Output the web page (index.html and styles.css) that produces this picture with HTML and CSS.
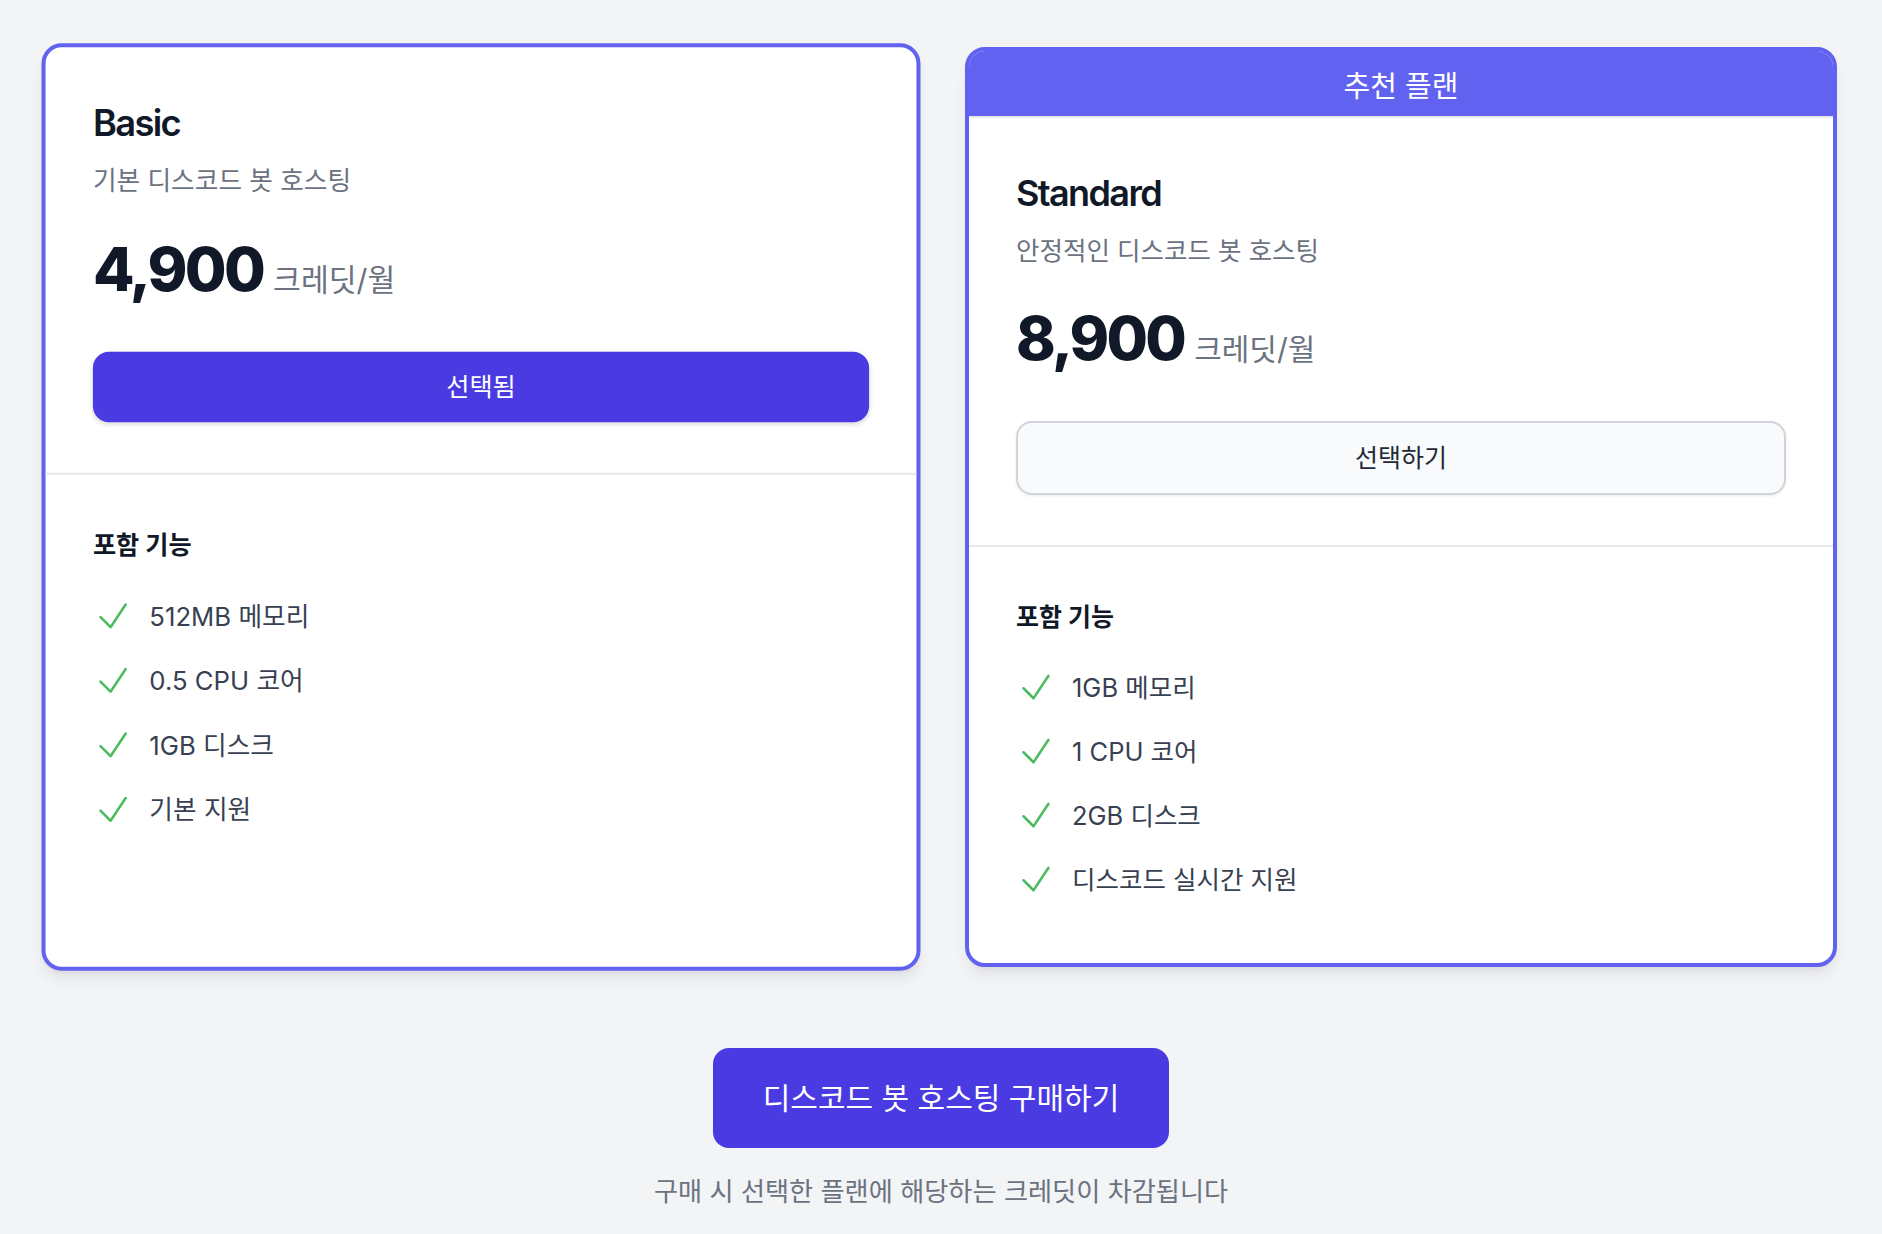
FILE: index.html
```html
<!DOCTYPE html>
<html lang="ko">
  <head>
    <meta charset="UTF-8" />
    <title>디스코드 봇 호스팅 플랜</title>
    <link rel="stylesheet" href="styles.css">
  </head>
  <body>
    <main class="page">
      <div class="plans">
        <!-- Basic (selected) -->
        <div class="plan plan-selected">
          <div class="plan-top">
            <h3 class="plan-name">Basic</h3>
            <p class="plan-desc">기본 디스코드 봇 호스팅</p>
            <div class="plan-price">
              <span class="amount">4,900</span>
              <span class="unit">크레딧/월</span>
            </div>
            <button class="plan-btn active">선택됨</button>
          </div>
          <div class="plan-features">
            <h4>포함 기능</h4>
            <ul>
              <li>
                <svg viewBox="0 0 24 24"><path d="m4.5 12.75 6 6 9-13.5" /></svg>
                <span>512MB 메모리</span>
              </li>
              <li>
                <svg viewBox="0 0 24 24"><path d="m4.5 12.75 6 6 9-13.5" /></svg>
                <span>0.5 CPU 코어</span>
              </li>
              <li>
                <svg viewBox="0 0 24 24"><path d="m4.5 12.75 6 6 9-13.5" /></svg>
                <span>1GB 디스크</span>
              </li>
              <li>
                <svg viewBox="0 0 24 24"><path d="m4.5 12.75 6 6 9-13.5" /></svg>
                <span>기본 지원</span>
              </li>
            </ul>
          </div>
        </div>

        <!-- Standard (recommended) -->
        <div class="plan">
          <div class="plan-badge">추천 플랜</div>
          <div class="plan-top">
            <h3 class="plan-name">Standard</h3>
            <p class="plan-desc">안정적인 디스코드 봇 호스팅</p>
            <div class="plan-price">
              <span class="amount">8,900</span>
              <span class="unit">크레딧/월</span>
            </div>
            <button class="plan-btn">선택하기</button>
          </div>
          <div class="plan-features">
            <h4>포함 기능</h4>
            <ul>
              <li>
                <svg viewBox="0 0 24 24"><path d="m4.5 12.75 6 6 9-13.5" /></svg>
                <span>1GB 메모리</span>
              </li>
              <li>
                <svg viewBox="0 0 24 24"><path d="m4.5 12.75 6 6 9-13.5" /></svg>
                <span>1 CPU 코어</span>
              </li>
              <li>
                <svg viewBox="0 0 24 24"><path d="m4.5 12.75 6 6 9-13.5" /></svg>
                <span>2GB 디스크</span>
              </li>
              <li>
                <svg viewBox="0 0 24 24"><path d="m4.5 12.75 6 6 9-13.5" /></svg>
                <span>디스코드 실시간 지원</span>
              </li>
            </ul>
          </div>
        </div>
      </div>

      <div class="checkout">
        <button class="buy-btn">디스코드 봇 호스팅 구매하기</button>
        <p class="buy-note">구매 시 선택한 플랜에 해당하는 크레딧이 차감됩니다</p>
      </div>
    </main>
  </body>
</html>
```

FILE: styles.css
```css
body {
  margin: 0;
  padding: 0;
  background: #f3f4f6;
  font-family: Inter, "Noto Sans CJK KR", sans-serif;
  color: #111827;
}

.page {
  padding: 47px 45px 20px;
}

.plans {
  display: grid;
  grid-template-columns: 1fr 1fr;
  gap: 48px;
}

.plan {
  display: flex;
  flex-direction: column;
  background: #fff;
  border: 4px solid #6262f0;
  border-radius: 20px;
  overflow: hidden;
  box-shadow: 0 10px 15px -3px rgba(0, 0, 0, 0.08),
    0 4px 6px -4px rgba(0, 0, 0, 0.08);
}

/* selected card sits a touch larger */
.plan-selected {
  transform: scale(1.008);
}

.plan-badge {
  height: 65px;
  display: flex;
  align-items: center;
  justify-content: center;
  background: #6262f0;
  color: #fff;
  font-size: 29px;
  border-bottom: 2px solid #e5e7eb;
}

.plan-top {
  padding: 52px 47px 50px;
  border-bottom: 2px solid #e5e7eb;
}

.plan-name {
  margin: 0;
  font-size: 36px;
  line-height: 46px;
  font-weight: 600;
  letter-spacing: -0.045em;
}

.plan-desc {
  margin: 17px 0 0;
  font-size: 25.5px;
  line-height: 35px;
  color: #6b7280;
}

.plan-price {
  display: flex;
  align-items: baseline;
  margin-top: 40px;
}

.plan-price .amount {
  font-size: 60px;
  line-height: 60px;
  font-weight: 800;
  letter-spacing: -0.045em;
}

.plan-price .unit {
  margin-left: 10px;
  font-size: 30px;
  line-height: 40px;
  color: #6b7280;
}

.plan-btn {
  display: block;
  width: 100%;
  margin-top: 52px;
  padding: 17.5px 0;
  font-family: inherit;
  font-size: 25px;
  line-height: 35px;
  color: #1f2937;
  background: #f9fafb;
  border: 2px solid #d1d5db;
  border-radius: 16px;
  box-shadow: 0 1px 3px rgba(0, 0, 0, 0.08);
  cursor: pointer;
}

.plan-btn.active {
  margin-top: 51px;
  padding: 17.5px 0;
  color: #fff;
  background: #4a3ae2;
  border: none;
  box-shadow: 0 2px 4px rgba(0, 0, 0, 0.12);
}

.plan-features {
  flex: 1;
  padding: 53px 47px 64px;
}

.plan-features h4 {
  margin: 0;
  font-size: 25px;
  line-height: 35px;
  font-weight: 700;
}

.plan-features ul {
  list-style: none;
  margin: 32px 0 0;
  padding: 0;
  display: flex;
  flex-direction: column;
  gap: 24px;
}

.plan-features li {
  display: flex;
  align-items: center;
  height: 40px;
  font-size: 25.5px;
  line-height: 35px;
  color: #374151;
}

.plan-features svg {
  width: 40px;
  height: 40px;
  margin-right: 16px;
  fill: none;
  stroke: #4cbb5f;
  stroke-width: 1.5;
  stroke-linecap: round;
  stroke-linejoin: round;
}

.checkout {
  display: flex;
  flex-direction: column;
  align-items: center;
  margin-top: 81px;
}

.buy-btn {
  padding: 30px 50px;
  font-family: inherit;
  font-size: 30px;
  line-height: 40px;
  color: #fff;
  background: #4a3ae2;
  border: none;
  border-radius: 16px;
  cursor: pointer;
}

.buy-note {
  margin: 26px 0 0;
  font-size: 26.2px;
  line-height: 35px;
  color: #6b7280;
}
```
